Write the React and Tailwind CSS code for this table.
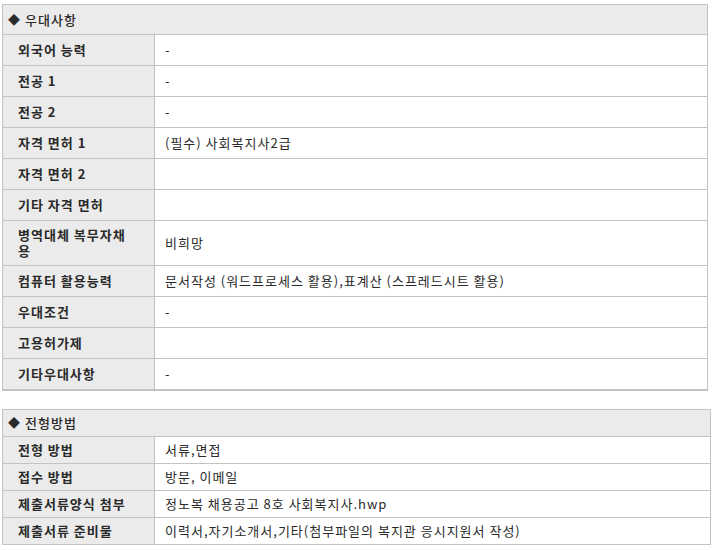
const PREF_ROWS = [
  { label: '외국어 능력', value: '-' },
  { label: '전공 1', value: '-' },
  { label: '전공 2', value: '-' },
  { label: '자격 면허 1', value: '(필수) 사회복지사2급' },
  { label: '자격 면허 2', value: '' },
  { label: '기타 자격 면허', value: '' },
  { label: '병역대체 복무자채용', value: '비희망' },
  { label: '컴퓨터 활용능력', value: '문서작성 (워드프로세스 활용),표계산 (스프레드시트 활용)' },
  { label: '우대조건', value: '-' },
  { label: '고용허가제', value: '' },
  { label: '기타우대사항', value: '-' },
]

const SELECT_ROWS = [
  { label: '전형 방법', value: '서류,면접' },
  { label: '접수 방법', value: '방문, 이메일' },
  { label: '제출서류양식 첨부', value: '정노복 채용공고 8호 사회복지사.hwp' },
  { label: '제출서류 준비물', value: '이력서,자기소개서,기타(첨부파일의 복지관 응시지원서 작성)' },
]

function InfoTable({ title, rows, rowClass, headClass, className }) {
  return (
    <div className={`border border-[#c3c3c3] ${className}`}>
      <div className={`flex items-center bg-[#ebebeb] pl-[5px] font-medium ${headClass}`}>
        <span className="text-[12px] mr-[5px] tracking-normal">◆</span>
        <span>{title}</span>
      </div>
      {rows.map(r => (
        <div key={r.label} className="flex border-t border-[#c3c3c3]">
          <div className={`w-[152px] shrink-0 bg-[#ebebeb] border-r border-[#c3c3c3] pl-[15px] pr-[22px] flex items-center font-bold leading-[16px] ${rowClass}`}>
            <span className="break-all">{r.label}</span>
          </div>
          <div className={`flex-1 pl-[10px] flex items-center leading-[16px] ${rowClass}`}>
            {r.value}
          </div>
        </div>
      ))}
    </div>
  )
}

export default function App() {
  return (
    <div className="bg-white w-[722px] h-[550px] pt-[4px] pl-[2px] text-[13px] tracking-[1px] text-[#2a2a2a]" style={{ fontFamily: "'Noto Sans CJK KR', 'Noto Sans', sans-serif" }}>
      <InfoTable
        title="우대사항"
        rows={PREF_ROWS}
        className="w-[706px] border-b-2"
        headClass="h-[29px]"
        rowClass="min-h-[30px] py-[6px]"
      />
      <InfoTable
        title="전형방법"
        rows={SELECT_ROWS}
        className="w-[709px] mt-[18px]"
        headClass="h-[26px]"
        rowClass="min-h-[26px] py-[5px]"
      />
    </div>
  )
}
